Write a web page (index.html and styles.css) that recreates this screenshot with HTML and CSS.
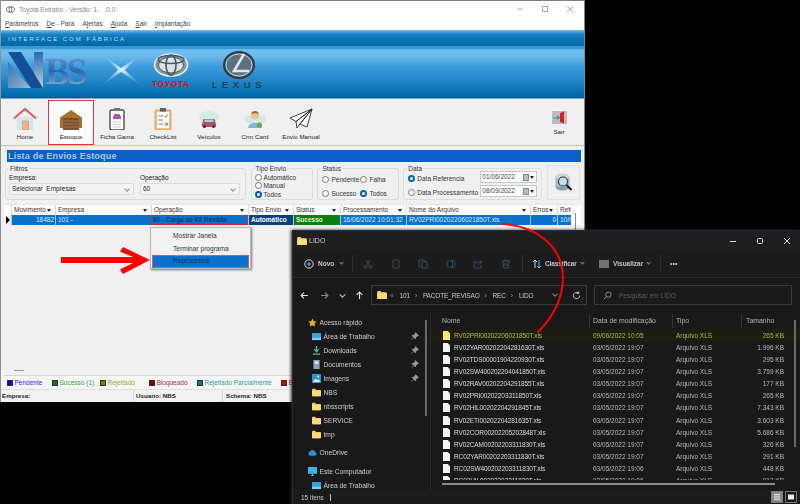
FILE: index.html
```html
<!DOCTYPE html>
<html lang="pt-BR">
<head>
<meta charset="utf-8">
<title>Toyota Extrator</title>
<link rel="stylesheet" href="styles.css">
</head>
<body>
<svg class="defs" width="0" height="0" aria-hidden="true">
  <symbol id="folder" viewBox="0 0 12 10"><path d="M0 1.2C0 .5.5 0 1.2 0h3l1.3 1.5h5.3c.7 0 1.2.5 1.2 1.2v6c0 .7-.5 1.3-1.2 1.3H1.2C.5 10 0 9.400 0 8.700z" fill="#f8cf5c"/><path d="M0 3h12v5.800c0 .7-.5 1.200-1.200 1.200H1.200C.5 10 0 9.500 0 8.800z" fill="#fbdc7b"/></symbol>
  <symbol id="file" viewBox="0 0 7 9"><path d="M0 0h4.700L7 2.300V9H0z" fill="currentColor"/></symbol>
  <symbol id="pin" viewBox="0 0 8 8"><path d="M4.500.5l3 3-1.200.4-1.500 1.500-.3 1.600L1 3.500l1.600-.3L4.100 1.700zM2.500 5.500L.5 7.500" fill="#9a9a9a" stroke="#9a9a9a" stroke-width=".7"/></symbol>
</svg>

<section class="win nbs">
  <header class="nbs-title">
    <svg class="nbs-appicon" viewBox="0 0 10 7"><ellipse cx="5" cy="3.500" rx="4.500" ry="3" fill="none" stroke="#555" stroke-width="1"/><ellipse cx="5" cy="3.500" rx="1.500" ry="3" fill="none" stroke="#555" stroke-width=".8"/></svg>
    <span class="nbs-title-text">Toyota Extrator - Versão: 1.&nbsp;&nbsp;&nbsp;.0.0</span>
    <div class="caps">
      <svg class="cap" viewBox="0 0 8 8"><path d="M1 4h6" stroke="#aaa"/></svg>
      <svg class="cap" viewBox="0 0 8 8"><rect x="1.500" y="1.500" width="5" height="5" fill="none" stroke="#aaa"/></svg>
      <svg class="cap" viewBox="0 0 8 8"><path d="M1 1l6 6M7 1L1 7" stroke="#aaa"/></svg>
    </div>
  </header>
  <nav class="menu"><span><u>P</u>arâmetros</span><span><u>D</u>e - Para</span><span>A<u>l</u>ertas</span><span><u>A</u>juda</span><span><u>S</u>air</span><span><u>I</u>mplantação</span></nav>

  <div class="band-top">INTERFACE COM FÁBRICA</div>
  <div class="band-main">
    <svg class="brand" viewBox="0 0 290 50" width="290" height="50">
      <defs>
        <linearGradient id="nb" x1="0" y1="0" x2="0" y2="1"><stop offset="0" stop-color="#7aa6d4"/><stop offset=".5" stop-color="#2a68b0"/><stop offset="1" stop-color="#a9c0d4"/></linearGradient>
        <linearGradient id="tri" x1="0" y1="0" x2="1" y2="1"><stop offset="0" stop-color="#2f74b8"/><stop offset="1" stop-color="#9db8cc"/></linearGradient>
        <linearGradient id="stem" x1="0" y1="0" x2="0" y2="1"><stop offset="0" stop-color="#2a6ab0"/><stop offset="1" stop-color="#c4ced6"/></linearGradient>
        <radialGradient id="xg"><stop offset="0" stop-color="#eef9ff" stop-opacity=".95"/><stop offset="1" stop-color="#8cc8f0" stop-opacity=".2"/></radialGradient>
      </defs>
      <path d="M33 5h9v36h-9z" fill="url(#stem)"/>
      <path d="M7 5h13l22 36H30z" fill="#154e98"/>
      <path d="M7 15l23 26H7z" fill="url(#tri)"/>
      <text class="logo-bs" x="44" y="37" fill="url(#nb)">BS</text>
      <path d="M100 6l20 15 21-15-17 17 17 16-21-14-20 14 17-16z" fill="url(#xg)"/>
      <ellipse cx="170" cy="18" rx="16.500" ry="11" fill="#8a96a0" stroke="#e8eef2" stroke-width="1.500"/>
      <ellipse cx="170" cy="18" rx="12.500" ry="8" fill="#dbe4ea" stroke="#4a5660" stroke-width="1"/>
      <ellipse cx="170" cy="18" rx="5" ry="10" fill="none" stroke="#4a5660" stroke-width="1.600"/>
      <ellipse cx="170" cy="12.500" rx="13" ry="4" fill="none" stroke="#4a5660" stroke-width="1.400"/>
      <text class="logo-toyota" x="151" y="40">TOYOTA</text>
      <ellipse cx="238" cy="18" rx="15" ry="13" fill="#5d7080" stroke="#2f3a44" stroke-width="2"/>
      <ellipse cx="238" cy="18" rx="13" ry="11" fill="none" stroke="#c8d0d8" stroke-width="1"/>
      <path d="M243 7l-10 17h15" fill="none" stroke="#e4e9ee" stroke-width="2.500"/>
      <text class="logo-lexus" x="211" y="41">LEXUS</text>
    </svg>
  </div>

  <div class="tools">
    <div class="tool"><svg class="ti" viewBox="0 0 24 22"><path d="M4 9h16v13H4z" fill="#cce6f6"/><rect x="9.500" y="13" width="6" height="9" fill="#f4b183" stroke="#d08a58" stroke-width=".6"/><path d="M1 10.500L12 1l11 9.500" fill="none" stroke="#e25d62" stroke-width="2.200"/></svg><span>Home</span></div>
    <div class="tool active"><svg class="ti" viewBox="0 0 24 22"><path d="M1 20V9.500L12 2l11 7.500V20z" fill="#a8722d"/><rect x="4" y="10" width="16" height="12" fill="#7c4f2c"/><path d="M4 13h16M4 16h16M4 19h16" stroke="#b0845c" stroke-width=".8"/></svg><span>Estoque</span></div>
    <div class="tool"><svg class="ti" viewBox="0 0 24 22"><rect x="5" y="2" width="14" height="20" rx="1.500" fill="#fff" stroke="#43505c" stroke-width="1.400"/><rect x="9" y="0" width="6" height="3" fill="#6a7884"/><path d="M8 9l1.500-3h5L16 9v2H8z" fill="#a854b4"/><path d="M8 14h8M8 16.500h8M8 19h8" stroke="#bbb" stroke-width=".8"/></svg><span>Ficha Gama</span></div>
    <div class="tool"><svg class="ti" viewBox="0 0 24 22"><rect x="4" y="2" width="16" height="20" rx="1" fill="#f0c27e" stroke="#d8a455"/><rect x="6" y="4" width="12" height="16" fill="#fff"/><rect x="9" y="0" width="6" height="3.500" fill="#4d6478"/><path d="M7 8h5M7 12h5M7 16h5" stroke="#667" stroke-width=".8"/><path d="M13.500 8l1.500 1 2-2.500" fill="none" stroke="#3a9a4a"/><path d="M14 15l3 2.500M17 15l-3 2.500" stroke="#d64545"/></svg><span>CheckList</span></div>
    <div class="tool"><svg class="ti" viewBox="0 0 24 22"><ellipse cx="12" cy="9" rx="10" ry="6" fill="#d4ebe6"/><path d="M5 16l1.500-5h11L19 16v3H5z" fill="#b84b63"/><rect x="7.500" y="11.500" width="9" height="2.500" fill="#9fd4e8"/><circle cx="7.500" cy="18.500" r="1.500" fill="#333"/><circle cx="16.500" cy="18.500" r="1.500" fill="#333"/></svg><span>Veículos</span></div>
    <div class="tool"><svg class="ti" viewBox="0 0 24 22"><ellipse cx="7" cy="11" rx="6" ry="4" fill="#d6e8e2"/><ellipse cx="18" cy="11" rx="5" ry="4" fill="#d6e8e2"/><circle cx="12" cy="7.500" r="4" fill="#eebf9a"/><path d="M8 6c1-4 7-4 8 0-3-1-5-1-8 0z" fill="#a06a3c"/><path d="M5 20c1-7 13-7 14 0z" fill="#7fb6dc"/><circle cx="16.500" cy="17" r="2.500" fill="#6aa84f"/></svg><span>Crm Card</span></div>
    <div class="tool"><svg class="ti" viewBox="0 0 24 22"><path d="M23 1L1 10l6 3.500zM23 1L7 13.500 8 20l3-4zM23 1L11 16l7 3z" fill="#fff" stroke="#2c2c2c" stroke-width=".9" stroke-linejoin="round"/></svg><span>Envio Manual</span></div>
    <div class="tool exit"><svg class="ti-exit" viewBox="0 0 15 13"><rect width="15" height="13" fill="#bdbdbd"/><path d="M8 2l4-1.500v12L8 11z" fill="#e01b24"/><path d="M1 6.500h4V4l3.500 2.500L5 9V7.500H1z" fill="#16a8b0"/></svg><span>Sair</span></div>
  </div>

  <h1 class="list-title">Lista de Envios Estoque</h1>

  <div class="filters">
    <div class="group g-filtros">
      <span class="gtitle">Filtros</span>
      <div class="field f1"><label>Empresa:</label><div class="select">Selecionar&nbsp; Empresas<i></i></div></div>
      <div class="field f2"><label>Operação</label><div class="select">60<i></i></div></div>
    </div>
    <div class="group g-tipo">
      <span class="gtitle">Tipo Envio</span>
      <div class="radio"><b></b>Automático</div>
      <div class="radio"><b></b>Manual</div>
      <div class="radio on"><b></b>Todos</div>
    </div>
    <div class="group g-status">
      <span class="gtitle">Status</span>
      <div class="radio"><b></b>Pendente</div>
      <div class="radio"><b></b>Falha</div>
      <div class="radio"><b></b>Sucesso</div>
      <div class="radio on"><b></b>Todos</div>
    </div>
    <div class="group g-data">
      <span class="gtitle">Data</span>
      <div class="radio on"><b></b>Data Referencia</div>
      <div class="date">01/06/2022<i></i></div>
      <div class="radio"><b></b>Data Processamento</div>
      <div class="date">08/09/2022<i></i></div>
    </div>
    <div class="search-btn">
      <svg viewBox="0 0 17 19" width="17" height="19"><ellipse cx="7.500" cy="14" rx="7" ry="3.500" fill="#8e9aa4"/><rect x=".5" y="3" width="14" height="11" fill="#aab4bc"/><ellipse cx="7.500" cy="3.500" rx="7" ry="3" fill="#cdd5da"/><circle cx="8" cy="8.500" r="4.500" fill="#bfe2f2" stroke="#3b3f44" stroke-width="1.200"/><path d="M11.500 12l5 5" stroke="#1c1c1c" stroke-width="2"/></svg>
    </div>
  </div>

  <div class="table">
    <div class="thead">
      <div class="th0"></div>
      <div class="th">Movimento</div><div class="th">Empresa</div><div class="th">Operação</div><div class="th">Tipo Envio</div><div class="th">Status</div><div class="th">Processamento</div><div class="th">Nome do Arquivo</div><div class="th">Erros</div><div class="th plain">Refe</div>
    </div>
    <div class="trow">
      <div class="td0"></div>
      <div class="td num">18482</div><div class="td">101 -</div><div class="td focus">60 - Carga de Kit Revisão</div><div class="td auto">Automático</div><div class="td ok">Sucesso</div><div class="td">16/06/2022 10:01:32</div><div class="td">RV02PRI00202206021850T.xls</div><div class="td num">0</div><div class="td">10/0</div>
    </div>
    <div class="grid-empty"><span class="grid-mark"></span></div>
    <span class="table-scroll"></span>
  </div>

  <div class="legend">
    <span class="lg c1"><i></i>Pendente</span>
    <span class="lg c2"><i></i>Sucesso (1)</span>
    <span class="lg c3"><i></i>Rejeitado</span>
    <span class="lg c4"><i></i>Bloqueado</span>
    <span class="lg c5"><i></i>Rejeitado Parcialmente</span>
    <span class="lg c6"><i></i>Erro</span>
  </div>
  <footer class="status"><span class="s1">Empresa:</span><span class="s2">Usuario: NBS</span><span class="s3">Schema: NBS</span></footer>
</section>

<div class="ctx">
  <div class="ctx-item">Mostrar Janela</div>
  <div class="ctx-item">Terminar programa</div>
  <div class="ctx-item sel">Reprocessar</div>
</div>

<section class="win exp">
  <header class="exp-title">
    <svg class="ic10"><use href="#folder"/></svg><span>LIDO</span>
    <div class="exp-caps">
      <svg class="cap" viewBox="0 0 8 8"><path d="M1 4.500h6" stroke="#ddd"/></svg>
      <svg class="cap" viewBox="0 0 8 8"><rect x="1.500" y="1.500" width="5" height="5" rx="1" fill="none" stroke="#ddd"/></svg>
      <svg class="cap" viewBox="0 0 8 8"><path d="M1 1l6 6M7 1L1 7" stroke="#ddd"/></svg>
    </div>
  </header>
  <div class="cmd">
    <svg class="cmd-new" viewBox="0 0 10 10"><circle cx="5" cy="5" r="4.200" fill="none" stroke="#c8d8e8"/><path d="M5 3v4M3 5h4" stroke="#5fb0f0"/></svg>
    <span class="cmd-label w-novo">Novo</span><span class="chev"></span>
    <span class="vsep s-a"></span>
    <svg class="dis" viewBox="0 0 10 10"><path d="M3 1l4 6M7 1L3 7" stroke="#2f4a62"/><circle cx="2.500" cy="8" r="1.400" fill="none" stroke="#2f4a62"/><circle cx="7.500" cy="8" r="1.400" fill="none" stroke="#2f4a62"/></svg>
    <svg class="dis" viewBox="0 0 10 10"><rect x="2" y="1" width="6" height="8" rx="1" fill="none" stroke="#3c4a56"/></svg>
    <svg class="dis" viewBox="0 0 10 10"><rect x="1" y="1" width="6" height="7" rx="1" fill="none" stroke="#3c4a56"/><rect x="4" y="3" width="5" height="6" fill="#191919" stroke="#3c4a56"/></svg>
    <svg class="dis" viewBox="0 0 10 10"><rect x="1" y="2" width="8" height="6" rx="1" fill="none" stroke="#2f4a62"/><path d="M6.500 1v8" stroke="#2f4a62"/></svg>
    <svg class="dis" viewBox="0 0 10 10"><path d="M8 6v3H1V3h3M4 6c0-2 1-3 4-3M6.500 1L9 3 6.500 5" fill="none" stroke="#2f4a62"/></svg>
    <svg class="dis" viewBox="0 0 10 10"><path d="M1 2h8M3.500 2V1h3v1M2 2l.5 7h5L8 2M4 4v3M6 4v3" fill="none" stroke="#3c4a56"/></svg>
    <span class="vsep s-b"></span>
    <svg class="cmd-sort" viewBox="0 0 10 10"><path d="M3 9V1M1 3l2-2 2 2" fill="none" stroke="#c8d8e8"/><path d="M7 1v8M5 7l2 2 2-2" fill="none" stroke="#5fb0f0"/></svg>
    <span class="cmd-label w-class">Classificar</span><span class="chev"></span>
    <svg class="cmd-view" viewBox="0 0 10 8"><path d="M0 1h10M0 3h10M0 5h10M0 7h10" stroke="#c8c8c8"/></svg>
    <span class="cmd-label w-vis">Visualizar</span><span class="chev"></span>
    <span class="vsep s-c"></span>
    <span class="dots">•••</span>
  </div>
  <div class="navrow">
    <svg class="nav n1" viewBox="0 0 8 8"><path d="M7 4H1M3.500 1.500L1 4l2.500 2.500" fill="none" stroke="#e4e4e4"/></svg>
    <svg class="nav n2" viewBox="0 0 8 8"><path d="M1 4h6M4.500 1.500L7 4 4.500 6.500" fill="none" stroke="#8a8a8a"/></svg>
    <svg class="nav n3" viewBox="0 0 8 8"><path d="M1.500 3L4 5.500 6.500 3" fill="none" stroke="#b8b8b8"/></svg>
    <svg class="nav n4" viewBox="0 0 8 8"><path d="M4 7V1M1.500 3.500L4 1l2.500 2.500" fill="none" stroke="#e4e4e4"/></svg>
    <div class="addr">
      <svg class="ic10"><use href="#folder"/></svg>
      <span class="crumb c0">«</span><span class="crumb">101</span><span class="sep">›</span><span class="crumb">PACOTE_REVISAO</span><span class="sep">›</span><span class="crumb">REC</span><span class="sep">›</span><span class="crumb">LIDO</span>
      <span class="addr-end"><span class="chev big"></span><svg class="refresh" viewBox="0 0 10 10"><path d="M8.500 5A3.500 3.500 0 1 1 7 2.200M7.500 .5v2.200H5.300" fill="none" stroke="#d8d8d8"/></svg></span>
    </div>
    <div class="searchbox">
      <svg class="lens" viewBox="0 0 10 10"><circle cx="6" cy="4" r="3" fill="none" stroke="#9a9a9a"/><path d="M3.800 6.200L1 9" stroke="#9a9a9a"/></svg>
      <span>Pesquisar em LIDO</span>
    </div>
  </div>
  <div class="exp-body">
    <aside class="side">
      <div class="si l0"><svg class="ic11" viewBox="0 0 10 10"><path d="M5 .5l1.400 3 3.300.4-2.400 2.300.6 3.300L5 8 2.100 9.500l.6-3.300L.3 3.900l3.300-.4z" fill="#f2b705"/></svg>Acesso rápido</div>
      <div class="si l1"><svg class="ic11" viewBox="0 0 10 8"><rect width="10" height="8" rx=".5" fill="#3aa0dc"/><rect y="5.500" width="10" height="2.500" fill="#7ed0f0"/></svg>Área de Trabalho<svg class="pin"><use href="#pin"/></svg></div>
      <div class="si l1"><svg class="ic11" viewBox="0 0 10 10"><path d="M5 0v6M2.500 3.500L5 6.500l2.500-3" fill="none" stroke="#3dc49a" stroke-width="1.400"/><path d="M1 9h8" stroke="#3dc49a" stroke-width="1.400"/></svg>Downloads<svg class="pin"><use href="#pin"/></svg></div>
      <div class="si l1"><svg class="ic11" viewBox="0 0 10 10"><rect x="1.500" width="7" height="10" fill="#8aa0b8"/><rect x="3" y="1.500" width="4" height="3" fill="#dde6ee"/></svg>Documentos<svg class="pin"><use href="#pin"/></svg></div>
      <div class="si l1"><svg class="ic11" viewBox="0 0 10 10"><rect width="10" height="10" fill="#2c8fd8"/><path d="M1 9l3-4 2 2 1.500-1.500L9 9z" fill="#e4f2fb"/><circle cx="7" cy="2.800" r="1" fill="#fff"/></svg>Imagens<svg class="pin"><use href="#pin"/></svg></div>
      <div class="si l1"><svg class="ic11"><use href="#folder"/></svg>NBS</div>
      <div class="si l1"><svg class="ic11"><use href="#folder"/></svg>nbsscripts</div>
      <div class="si l1"><svg class="ic11"><use href="#folder"/></svg>SERVICE</div>
      <div class="si l1"><svg class="ic11"><use href="#folder"/></svg>tmp</div>
      <div class="si l0 gap1"><svg class="ic11" viewBox="0 0 10 7"><path d="M2.500 7a2.300 2.300 0 0 1-.3-4.500A3 3 0 0 1 7.800 2.800 2.200 2.200 0 0 1 8 7z" fill="#2a8fe0"/></svg>OneDrive</div>
      <div class="si l0 gap2"><svg class="ic11" viewBox="0 0 10 10"><rect width="10" height="7.500" fill="#38b4e8"/><path d="M3.500 9.500h3M5 7.500v2" stroke="#9ab"/></svg>Este Computador</div>
      <div class="si l1"><svg class="ic11" viewBox="0 0 10 8"><rect width="10" height="8" rx=".5" fill="#3aa0dc"/><rect y="5.500" width="10" height="2.500" fill="#7ed0f0"/></svg>Área de Trabalho</div>
      <span class="side-scroll"></span>
    </aside>
    <main class="files">
      <div class="fhead"><span class="c-name">Nome</span><span class="c-date">Data de modificação</span><span class="c-type">Tipo</span><span class="c-size">Tamanho</span></div>
      <div class="frows">
        <div class="fr hl"><span class="c-name"><svg class="fi"><use href="#file"/></svg>RV02PRI00202206021850T.xls</span><span class="c-date">09/06/2022 10:05</span><span class="c-type">Arquivo XLS</span><span class="c-size">265 KB</span></div>
        <div class="fr"><span class="c-name"><svg class="fi"><use href="#file"/></svg>RV02YAR00202204281630T.xls</span><span class="c-date">03/05/2022 19:07</span><span class="c-type">Arquivo XLS</span><span class="c-size">1.996 KB</span></div>
        <div class="fr"><span class="c-name"><svg class="fi"><use href="#file"/></svg>RV02TDS00001904220930T.xls</span><span class="c-date">03/05/2022 19:07</span><span class="c-type">Arquivo XLS</span><span class="c-size">295 KB</span></div>
        <div class="fr"><span class="c-name"><svg class="fi"><use href="#file"/></svg>RV02SW400202204041850T.xls</span><span class="c-date">03/05/2022 19:07</span><span class="c-type">Arquivo XLS</span><span class="c-size">3.759 KB</span></div>
        <div class="fr"><span class="c-name"><svg class="fi"><use href="#file"/></svg>RV02RAV00202204291855T.xls</span><span class="c-date">03/05/2022 19:07</span><span class="c-type">Arquivo XLS</span><span class="c-size">177 KB</span></div>
        <div class="fr"><span class="c-name"><svg class="fi"><use href="#file"/></svg>RV02PRI00202203311850T.xls</span><span class="c-date">03/05/2022 19:07</span><span class="c-type">Arquivo XLS</span><span class="c-size">265 KB</span></div>
        <div class="fr"><span class="c-name"><svg class="fi"><use href="#file"/></svg>RV02HIL00202204291845T.xls</span><span class="c-date">03/05/2022 19:07</span><span class="c-type">Arquivo XLS</span><span class="c-size">7.343 KB</span></div>
        <div class="fr"><span class="c-name"><svg class="fi"><use href="#file"/></svg>RV02ETI00202204281635T.xls</span><span class="c-date">03/05/2022 19:07</span><span class="c-type">Arquivo XLS</span><span class="c-size">3.603 KB</span></div>
        <div class="fr"><span class="c-name"><svg class="fi"><use href="#file"/></svg>RV02COR00202205202848T.xls</span><span class="c-date">03/05/2022 19:07</span><span class="c-type">Arquivo XLS</span><span class="c-size">5.686 KB</span></div>
        <div class="fr"><span class="c-name"><svg class="fi"><use href="#file"/></svg>RV02CAM00202203311830T.xls</span><span class="c-date">03/05/2022 19:07</span><span class="c-type">Arquivo XLS</span><span class="c-size">326 KB</span></div>
        <div class="fr"><span class="c-name"><svg class="fi"><use href="#file"/></svg>RC02YAR00202203311830T.xls</span><span class="c-date">03/05/2022 19:07</span><span class="c-type">Arquivo XLS</span><span class="c-size">291 KB</span></div>
        <div class="fr"><span class="c-name"><svg class="fi"><use href="#file"/></svg>RC02SW400202203311830T.xls</span><span class="c-date">03/05/2022 19:06</span><span class="c-type">Arquivo XLS</span><span class="c-size">448 KB</span></div>
        <div class="fr"><span class="c-name"><svg class="fi"><use href="#file"/></svg>RC02HIL00202203311830T.xls</span><span class="c-date">03/05/2022 19:06</span><span class="c-type">Arquivo XLS</span><span class="c-size">913 KB</span></div>
      </div>
      <div class="hscroll"></div>
      <span class="vscroll"></span>
    </main>
  </div>
  <footer class="exp-status">
    <span>15 itens</span><span class="bar"></span>
    <span class="viewbtns">
      <span class="vb on"><svg viewBox="0 0 8 8"><path d="M1 1.500h6M1 3.200h6M1 4.900h6M1 6.600h6" stroke="#ddd"/></svg></span>
      <span class="vb"><svg viewBox="0 0 8 8"><rect x="1" y="1.500" width="6" height="5" fill="#eee"/></svg></span>
    </span>
  </footer>
</section>

<svg class="overlay" viewBox="0 0 800 504" width="800" height="504" aria-hidden="true">
  <path class="curve" d="M503 224C535 226 562 245 563 277C563 300 552 318 538 332"/>
  <path class="arrow" d="M61 257H133L120 251.500L123 247L150 260L123 274L120 269.500L133 263H61z"/>
</svg>
</body>
</html>
```
FILE: styles.css
```css
* { box-sizing: border-box; }
html, body { margin: 0; padding: 0; }
body {
  width: 800px; height: 504px; overflow: hidden; position: relative;
  background: #000; font-family: "Liberation Sans", Arial, sans-serif; font-size: 6.5px; color: #222;
  filter: blur(.45px);
}
.defs { position: absolute; }
svg { display: block; }
.win { position: absolute; display: flex; flex-direction: column; overflow: hidden; }
.overlay { position: absolute; left: 0; top: 0; pointer-events: none; }
.curve { fill: none; stroke: #f00; stroke-width: 2; stroke-linecap: round; }
.arrow { fill: #f00; }

/* NBS window */
.nbs { left: 0; top: 0; width: 585px; height: 402px; background: #f0f0f0; border-top: 1px solid #7c8088; border-right: 1px solid #7e8790; border-left: 1px solid #8e9296; }
.nbs-title { height: 16px; background: #fff; display: flex; align-items: center; padding-left: 5px; position: relative; color: #888; font-size: 6.6px; }
.nbs-appicon { width: 9px; height: 7px; margin-right: 4px; }
.caps { margin-left: auto; display: flex; gap: 17px; margin-right: 10px; }
.cap { width: 8px; height: 8px; }
.menu { height: 13px; background: #fff; display: flex; align-items: center; padding-left: 4px; gap: 8px; font-size: 6.5px; color: #444; }
.band-top { height: 16px; background: linear-gradient(#7cc0ea 0, #2a8fd0 20%, #1a80c4 30%, #0b72b4 55%, #006aa8 100%); color: #b9dcf2; font-size: 6px; letter-spacing: 1.95px; padding: 5px 0 0 7px; line-height: 8px; }
.band-main { height: 53px; background: linear-gradient(#3a97d6 0, #3a97d6 5%, #6ebdef 7%, #6ebdef 18%, #3c9bdb 40%, #2b8ccc 60%, #0670b0 90%, #00609e 100%); border-bottom: 1px solid #7ea9c6; }
.brand { margin-top: 1px; }
.logo-bs { font: bold 37px "Liberation Serif", serif; letter-spacing: -3px; }
.logo-toyota { font: bold 8.5px "Liberation Sans", sans-serif; fill: #e00b20; letter-spacing: .5px; }
.logo-lexus { font: 9.500px "Liberation Sans", sans-serif; fill: #2c343c; stroke: #2c343c; stroke-width: .2px; letter-spacing: 4.600px; }

.tools { height: 47px; display: flex; background: #f0f0f0; border-bottom: 1px solid #c4c4c4; padding: 1px 0 0 1px; flex-shrink: 0; }
.tool { width: 46px; height: 45px; display: flex; flex-direction: column; align-items: center; padding-top: 8px; font-size: 6.2px; color: #222; }
.tool span { margin-top: 2px; line-height: 9px; white-space: nowrap; }
.ti { width: 24px; height: 22px; }
.tool.active { background: #fff; outline: 1px solid #e8343c; outline-offset: -1px; }
.tool.exit { margin-left: auto; margin-right: 2px; padding-top: 11px; }
.ti-exit { width: 15px; height: 13px; }
.tool.exit span { margin-top: 3px; }

.list-title { margin: 4px 3px 0 6px; height: 12px; flex-shrink: 0; background: #0a5fc8; color: #aec7e6; font: bold 9px/12px "Liberation Sans", sans-serif; letter-spacing: .2px; padding-left: 1px; }

.filters { height: 38px; display: flex; align-items: flex-end; gap: 4px; padding: 0 4px; flex-shrink: 0; }
.group { position: relative; height: 32px; border: 1px solid #dcdcdc; border-radius: 3px; background: #f0f0f0; }
.gtitle { position: absolute; left: 3px; top: -5px; line-height: 9px; padding: 0 1px; background: #f0f0f0; color: #333; }
.g-filtros { width: 241px; display: flex; padding: 4px 0 0 3px; gap: 6px; }
.field { display: flex; flex-direction: column; }
.f1 { width: 125px; } .f2 { width: 100px; }
.field label { height: 10px; line-height: 10px; }
.select { height: 12px; border: 1px solid #dcdcdc; border-radius: 2px; background: #f4f4f4; line-height: 10px; padding-left: 2px; position: relative; white-space: nowrap; }
.select i { position: absolute; right: 4px; top: 3px; width: 4px; height: 4px; border: solid #888; border-width: 0 1px 1px 0; transform: rotate(45deg); }
.g-tipo { width: 63px; margin-left: 1px; padding: 4px 0 0 3px; display: flex; flex-direction: column; }
.g-tipo .radio { height: 8.500px; }
.radio { display: flex; align-items: center; white-space: nowrap; color: #333; }
.radio b { width: 7px; height: 7px; border: 1px solid #777; border-radius: 50%; background: #fff; margin-right: 2px; flex-shrink: 0; }
.radio.on b { border: 2px solid #0a5fb8; background: #fff; }
.g-status { width: 82px; display: grid; grid-template-columns: 38px 1fr; grid-auto-rows: 14px; padding: 3px 0 0 4px; }
.g-data { width: 139px; display: grid; grid-template-columns: 72px 57px; grid-auto-rows: 14px; padding: 2px 0 0 4px; }
.date { height: 12px; border: 1px solid #c8c8c8; background: #fff; line-height: 10px; padding-left: 1px; position: relative; color: #444; }
.date i { position: absolute; right: 7px; top: 1.500px; width: 6px; height: 7px; background: #b4bcc4; border: 1px solid #808890; }
.date::after { content: ""; position: absolute; right: 2px; top: 4px; border: 2px solid transparent; border-top: 3px solid #224; }
.search-btn { width: 33px; height: 35px; margin-left: 1px; background: #f0f0f0; border: 1px solid #e2e2e2; border-radius: 2px; display: flex; align-items: center; justify-content: center; }

.table { margin: 4px 3px 0 3px; flex: 1; display: flex; flex-direction: column; min-height: 0; position: relative; }
.table-scroll { position: absolute; right: 5px; top: 9px; width: 1px; height: 17px; background: #8a8a8a; }
.thead, .trow { display: grid; grid-template-columns: 7px 44px 96px 97px 45px 47px 66px 124px 27px 14px 1fr; }
.thead { height: 11px; background: #fff; border-top: 1px solid #e4e4e4; }
.th { border-left: 1px solid #d8d8d8; padding-left: 2px; line-height: 10px; position: relative; color: #333; white-space: nowrap; }
.th::after { content: ""; position: absolute; right: 4px; top: 4px; border: 2px solid transparent; border-top: 3px solid #222; }
.th.plain::after { display: none; }
.th.plain { overflow: hidden; }
.trow { height: 10px; background: linear-gradient(#fff,#fff) no-repeat right/10px 100%, #0a72cc; color: #dcebf8; position: relative; }
.td0 { background: #f0f0f0; position: relative; }
.td0::after { content: ""; position: absolute; left: 2px; top: 1px; border: 4px solid transparent; border-left: 4px solid #000; }
.td { padding-left: 2px; line-height: 10px; border-left: 1px solid #a8c8e8; white-space: nowrap; overflow: hidden; }
.td.num { text-align: right; padding-right: 1px; }
.td.focus { outline: 1px solid #e0202c; outline-offset: -1px; color: #0a2a55; border-left: 0; }
.td.auto { background: #0b3f7c; color: #fff; font-weight: bold; }
.td.ok { background: #0d7d12; color: #eaf5c8; font-weight: bold; }
.grid-empty { flex: 1; position: relative; border-bottom: 1px solid #d4d4d4; background: #f0f0f0; }
.grid-mark { position: absolute; left: 10px; bottom: 4px; width: 10px; height: 1px; background: #999; }

.legend { height: 13px; flex-shrink: 0; display: flex; align-items: center; background: #f6f6f6; padding-left: 6px; }
.lg { display: flex; align-items: center; white-space: nowrap; }
.lg i { width: 6px; height: 6px; margin-right: 1.500px; border: .5px solid #333; }
.c1 { color: #2a2af0; width: 45px; } .c1 i { background: #0000f0; }
.c2 { color: #3da13d; width: 48px; } .c2 i { background: #0a7d0a; }
.c3 { color: #a4a040; width: 49px; } .c3 i { background: #808000; }
.c4 { color: #a03040; width: 48px; } .c4 i { background: #800000; }
.c5 { color: #309a9a; width: 84px; } .c5 i { background: #008080; }
.c6 { color: #d02020; } .c6 i { background: #d00000; }
.status { height: 13px; flex-shrink: 0; display: flex; background: #f2f2f2; border-top: 1px solid #e0e0e0; font-weight: bold; font-size: 6.2px; line-height: 12px; color: #222; }
.s1 { width: 132px; padding-left: 1px; } .s2 { width: 89px; border-left: 1px solid #d4d4d4; padding-left: 2px; } .s3 { border-left: 1px solid #d4d4d4; padding-left: 3px; }

/* Context menu */
.ctx { position: absolute; left: 150px; top: 227px; width: 101px; height: 42px; background: #f2f2f2; border: 1px solid #b8b8b8; box-shadow: 1px 1px 2px #777; padding: 2px; color: #333; font-size: 6.6px; }
.ctx-item { height: 12.500px; line-height: 12.500px; padding-left: 20px; }
.ctx-item.sel { height: 11px; line-height: 10px; background: #0a72cc; outline: 1px solid #e8506a; color: #12335c; margin-top: 1px; }

/* Explorer */
.exp { left: 292px; top: 230px; width: 508px; height: 274px; background: #191919; color: #cfcfcf; border-left: 1px solid #222c3a; border-top: 1px solid #232c3c; box-shadow: -1px 0 3px #222; }
.exp-title { height: 19px; display: flex; align-items: center; padding-left: 4px; background: #1f1f1f; gap: 2px; font-size: 7px; }
.ic10 { width: 10px; height: 8px; flex-shrink: 0; }
.exp-caps { margin-left: auto; display: flex; gap: 19px; margin-right: 9px; }
.cmd { height: 28px; display: flex; align-items: center; padding-left: 11px; border-bottom: 1px solid #2c2c2c; flex-shrink: 0; background: #1c1c1c; }
.cmd-new { width: 10px; height: 10px; }
.cmd-label { font-weight: bold; margin-left: 4px; color: #c4c4c4; white-space: nowrap; display: block; }
.w-novo { width: 17px; } .w-class { width: 31px; margin-left: 3px; letter-spacing: -.1px; } .w-vis { width: 29px; }
.chev { width: 3px; height: 3px; border: solid #8a8a8a; border-width: 0 1px 1px 0; transform: rotate(45deg); margin: -2px 0 0 5px; flex-shrink: 0; }
.vsep { width: 1px; height: 17px; background: #2e2e2e; }
.s-a { margin: 0 10px 0 9px; } .s-b { margin: 0 9px 0 11.500px; } .s-c { margin: 0 9px 0 10px; }
.dis { width: 10px; height: 10px; margin-right: 17.500px; }
.dis:nth-of-type(7) { margin-right: 0; }
.cmd-sort { width: 10px; height: 10px; }
.cmd-view { width: 10px; height: 8px; margin-left: 15px; }
.dots { font-size: 7px; color: #d0d0d0; }
.navrow { height: 34px; display: flex; align-items: center; flex-shrink: 0; padding-left: 7px; background: #191919; }
.nav { width: 9px; height: 9px; }
.n1 { margin-right: 11px; } .n2 { margin-right: 9px; } .n3 { margin-right: 8px; } .n4 { margin-right: 7px; }
.addr { width: 216px; height: 20px; border: 1px solid #3a3a3a; display: flex; align-items: center; padding-left: 5px; color: #c8c8c8; letter-spacing: -.15px; }
.crumb { margin-left: 3px; } .crumb.c0 { color: #888; margin-right: 3px; }
.sep { margin: 0 6px 0 5px; color: #aaa; }
.crumb + .sep + .crumb { margin-left: 0; }
.addr-end { margin-left: auto; display: flex; align-items: center; gap: 15px; padding-right: 5px; }
.chev.big { width: 4px; height: 4px; margin: -2px 0 0 0; }
.refresh { width: 9px; height: 9px; }
.searchbox { width: 198px; height: 20px; margin-left: 7px; border: 1px solid #3a3a3a; display: flex; align-items: center; padding-left: 8px; color: #5e5e5e; gap: 7px; background: #1a1a1a; }
.lens { width: 9px; height: 9px; }
.exp-body { flex: 1; display: flex; min-height: 0; background: #191919; }
.side { width: 138px; border-right: 1px solid #2a2a2a; padding-top: 3px; position: relative; overflow: hidden; flex-shrink: 0; color: #cfcfcf; font-size: 6.7px; }
.si { height: 14px; display: flex; align-items: center; position: relative; white-space: nowrap; }
.l0 { padding-left: 15px; } .l1 { padding-left: 19px; }
.ic11 { width: 9px; height: 9px; margin-right: 2.500px; flex-shrink: 0; }
.gap1 { margin-top: 4px; } .gap2 { margin-top: 5px; }
.pin { position: absolute; left: 118px; top: 3px; width: 8px; height: 8px; }
.side-scroll { position: absolute; left: 132px; top: 8px; width: 2px; height: 96px; background: #6a6a6a; }
.files { flex: 1; position: relative; min-width: 0; display: flex; flex-direction: column; color: #b8b8b8; }
.fhead, .fr { display: grid; grid-template-columns: 151px 83px 64px 48px; padding-left: 11px; align-items: center; }
.fhead { height: 17px; flex-shrink: 0; color: #b4b4b4; font-size: 6.9px; }
.fhead span { position: relative; height: 100%; line-height: 17px; }
.fhead span + span::before { content: ""; position: absolute; left: -4px; top: 2px; width: 1px; height: 14px; background: #333; }
.frows { height: 151px; overflow: hidden; flex-shrink: 0; }
.fr { height: 12.150px; white-space: nowrap; }
.fr .c-name { display: flex; align-items: center; color: #dcdcdc; letter-spacing: -.1px; }
.fi { width: 7px; height: 9px; margin: 0 4px 0 1px; color: #f2f2f2; flex-shrink: 0; }
.c-size { text-align: right; padding-right: 4px; }
.fhead .c-size { text-align: left; padding-left: 6px; padding-right: 0; white-space: nowrap; }
.fhead .c-size::before { left: 1px; }
.fr.hl { background: #1d1d12; color: #b6b63a; }
.fr.hl .c-name { color: #bcbc3c; }
.fr.hl .fi { color: #f7ef50; }
.hscroll { height: 1.500px; width: 333px; margin: 3px 0 0 11px; background: #8a8a8a; }
.vscroll { position: absolute; right: 4px; top: 8px; width: 2px; height: 127px; background: #6a6a6a; }
.exp-status { height: 14px; flex-shrink: 0; display: flex; align-items: center; padding-left: 8px; background: #1b1b1b; color: #c8c8c8; }
.bar { width: 1px; height: 7px; background: #bbb; margin-left: 6px; }
.viewbtns { margin-left: auto; display: flex; gap: 2px; margin-right: 3px; }
.vb { width: 12px; height: 12px; display: block; padding: 1px; border: 1px solid #777; }
.vb.on { background: #888; }
```
